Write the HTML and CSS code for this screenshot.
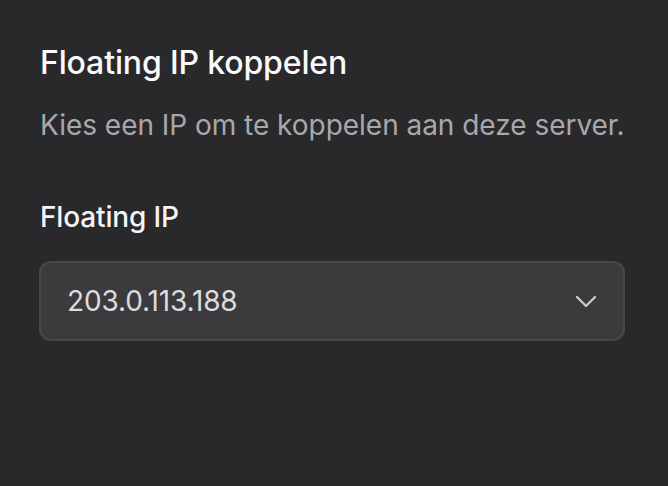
FILE: index.html
```html
<!DOCTYPE html>
<html lang="nl">
<head>
<meta charset="utf-8">
<title>Floating IP koppelen</title>
<link rel="stylesheet" href="styles.css">
</head>
<body>
<div class="dialog">
  <h1 class="title">Floating IP koppelen</h1>
  <p class="desc">Kies een IP om te koppelen aan deze server.</p>
  <label class="label">Floating IP</label>
  <div class="select">
    <span class="value">203.0.113.188</span>
    <svg class="chev" width="22" height="13" viewBox="0 0 22 13" fill="none"><path d="M2 2l9 9 9-9" stroke="#c8c8cc" stroke-width="2.4" stroke-linecap="round" stroke-linejoin="round"/></svg>
  </div>
</div>
</body>
</html>
```
FILE: styles.css
```css
html, body {
  margin: 0;
  padding: 0;
  background: #29292b;
  height: 100%;
}
body {
  font-family: Inter, "Noto Sans", sans-serif;
  color: #f4f4f5;
  letter-spacing: -0.15px;
}
.dialog {
  padding: 43px 40px 0 40px;
  display: flex;
  flex-direction: column;
}
.title {
  margin: 0;
  font-size: 32px;
  font-weight: 500;
  line-height: 40px;
  color: #fafafa;
}
.desc {
  margin: 22px 0 0;
  font-size: 28px;
  line-height: 40px;
  color: #a8a8ac;
  white-space: nowrap;
  letter-spacing: -0.03px;
}
.label {
  margin-top: 52px;
  font-size: 28px;
  font-weight: 500;
  line-height: 40px;
  color: #f4f4f5;
}
.select {
  margin-top: 24px;
  margin-left: -1px;
  margin-right: 3px;
  height: 80px;
  box-sizing: border-box;
  border: 2px solid #48484c;
  border-radius: 12px;
  background: #3b3b3e;
  display: flex;
  align-items: center;
  justify-content: space-between;
  padding: 0 26px 0 26px;
}
.value {
  font-size: 28px;
  line-height: 40px;
  color: #dcdcdf;
}
.chev { display: block; }
```
